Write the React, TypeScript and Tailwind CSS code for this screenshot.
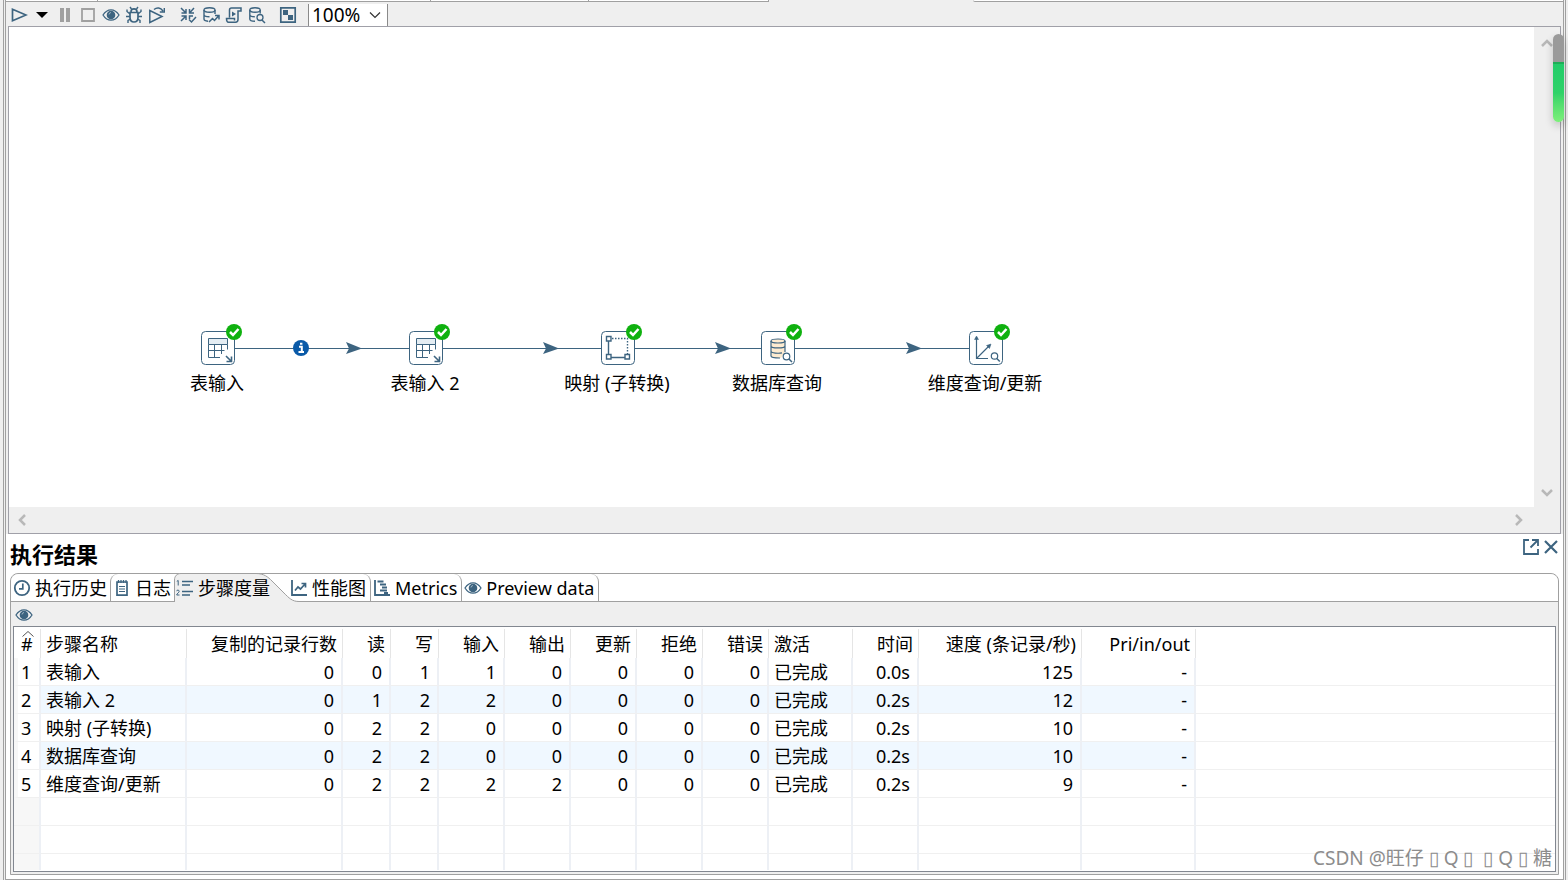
import { useState, type ReactNode } from "react";
import clsx from "clsx";

const INK = "#3d6480";

type StepKind = "table" | "mapping" | "database" | "dimension";

type Step = {
  name: string;
  kind: StepKind;
  x: number;
};

const steps: Step[] = [
  { name: "表输入", kind: "table", x: 209 },
  { name: "表输入 2", kind: "table", x: 417 },
  { name: "映射 (子转换)", kind: "mapping", x: 609 },
  { name: "数据库查询", kind: "database", x: 769 },
  { name: "维度查询/更新", kind: "dimension", x: 977 },
];

// x of the arrow tip on every hop
const hopArrows = [352, 549, 721, 912];

const columns = [
  { title: "#", width: 27, align: "left" },
  { title: "步骤名称", width: 146, align: "left" },
  { title: "复制的记录行数", width: 156, align: "right" },
  { title: "读", width: 48, align: "right" },
  { title: "写", width: 48, align: "right" },
  { title: "输入", width: 66, align: "right" },
  { title: "输出", width: 66, align: "right" },
  { title: "更新", width: 66, align: "right" },
  { title: "拒绝", width: 66, align: "right" },
  { title: "错误", width: 66, align: "right" },
  { title: "激活", width: 84, align: "left" },
  { title: "时间", width: 66, align: "right" },
  { title: "速度 (条记录/秒)", width: 163, align: "right" },
  { title: "Pri/in/out", width: 114, align: "right" },
];

const rows = [
  ["1", "表输入", "0", "0", "1", "1", "0", "0", "0", "0", "已完成", "0.0s", "125", "-"],
  ["2", "表输入 2", "0", "1", "2", "2", "0", "0", "0", "0", "已完成", "0.2s", "12", "-"],
  ["3", "映射 (子转换)", "0", "2", "2", "0", "0", "0", "0", "0", "已完成", "0.2s", "10", "-"],
  ["4", "数据库查询", "0", "2", "2", "0", "0", "0", "0", "0", "已完成", "0.2s", "10", "-"],
  ["5", "维度查询/更新", "0", "2", "2", "2", "2", "0", "0", "0", "已完成", "0.2s", "9", "-"],
];

function Icon({ children, size = 18 }: { children: ReactNode; size?: number }) {
  return (
    <svg
      width={size}
      height={size}
      viewBox="0 0 18 18"
      fill="none"
      stroke={INK}
      strokeWidth="1.7"
      className="shrink-0"
      aria-hidden="true"
    >
      {children}
    </svg>
  );
}

function EyeIcon() {
  return (
    <Icon>
      <path d="M1 9C3.500 5 6 3.800 9 3.800S14.500 5 17 9C14.500 13 12 14.200 9 14.200S3.500 13 1 9Z" strokeWidth="1.300" />
      <circle cx="9" cy="9" r="4.300" fill={INK} stroke="none" />
      <path d="M7 8.500A2.200 2.200 0 0 1 9 6.500" stroke="#9db3c2" strokeWidth="1" />
    </Icon>
  );
}

function RunIcon() {
  return (
    <Icon>
      <path d="M2.500 3.200 16 9 2.500 14.800Z" />
    </Icon>
  );
}

function PauseIcon() {
  return (
    <Icon>
      <path d="M4 2h4v14H4zM10 2h4v14h-4z" fill="#a0a0a0" stroke="none" />
    </Icon>
  );
}

function StopIcon() {
  return (
    <Icon>
      <path d="M3 3h12v12H3z" stroke="#a0a0a0" strokeWidth="1.800" />
    </Icon>
  );
}

function BugIcon() {
  return (
    <Icon>
      <path d="M5 6.500h8v5c0 2.500-1.500 4.500-4 4.500s-4-2-4-4.500zM6 6c0-2 1-3.200 3-3.200S12 4 12 6" />
      <path d="M6.500 3 5 1M11.500 3 13 1M5 8 2 5.500V3.500M13 8l3-2.500V3.500M5 10.500H1M13 10.500h4M5.500 13 3 14.500V17M12.500 13l2.500 1.500V17" strokeWidth="1.400" />
    </Icon>
  );
}

function ReplayIcon() {
  return (
    <Icon>
      <path d="M1.800 4.500v12L14 10.500Z" strokeWidth="1.500" />
      <path d="M6 3.500C9 1 12.500 1.500 15 5M16.300 2v4h-4.500" strokeWidth="1.400" />
    </Icon>
  );
}

function VerifyIcon() {
  return (
    <Icon>
      <path d="M2 2l5 5M7 3v4H2.500M15 2l-4.500 5M10.500 3v4H15M2 15l5-5M7 14v-4H2.500M10.500 13v-3H14" strokeWidth="1.500" />
      <path d="M10 13.500 12.500 16 17 11" strokeWidth="1.500" />
    </Icon>
  );
}

function ImpactIcon() {
  return (
    <Icon>
      <ellipse cx="7.500" cy="4" rx="5.500" ry="2.200" strokeWidth="1.400" />
      <path d="M2 4v9c0 1.200 1.500 2 4 2.200M13 4v4M2 8.500c0 1.600 3 2.200 5.500 2.200" strokeWidth="1.400" />
      <path d="M7 16l3.500-3.500 2 2L16.500 10M13 9.500h4v4" strokeWidth="1.500" />
    </Icon>
  );
}

function SqlIcon() {
  return (
    <Icon>
      <path d="M4.500 11.500V4C4.500 2.500 5.500 2 6.500 2H16v3h-3v8.500c0 1.700-1 2.700-2.500 2.700H3.500c-2 0-2-3.700-2-3.700h8v2" strokeWidth="1.500" />
      <path d="M7 5.500v5l4-2.500z" fill={INK} stroke="none" />
    </Icon>
  );
}

function ExploreIcon() {
  return (
    <Icon>
      <ellipse cx="7" cy="4" rx="5.200" ry="2.200" strokeWidth="1.400" />
      <path d="M1.800 4v9c0 1.200 2 2.200 5.200 2.200M12.200 4v3.500M1.800 8.500c0 1.500 2.500 2.200 5 2.200" strokeWidth="1.400" />
      <circle cx="12" cy="11.500" r="3" strokeWidth="1.300" />
      <path d="M14 14l3 3" strokeWidth="1.500" />
    </Icon>
  );
}

function ResultsIcon() {
  return (
    <Icon>
      <path d="M1.800 1.800h14.400v14.400H1.800z" />
      <path d="M4 4h5v5H4zM9 9h5v5H9z" fill={INK} stroke="none" />
    </Icon>
  );
}

function ClockIcon() {
  return (
    <Icon>
      <circle cx="9" cy="9" r="7.200" strokeWidth="1.800" />
      <path d="M9.800 4.500v5.300H6" />
    </Icon>
  );
}

function LogIcon() {
  return (
    <Icon>
      <path d="M4 3h10v13.200H4z" />
      <path d="M5.500 1v3M8 1v3M10.500 1v3M13 1v3" strokeWidth="1.300" />
      <path d="M6 7.500h6M6 10h6M6 12.500h6" strokeWidth="1.200" />
    </Icon>
  );
}

function MetricsListIcon() {
  return (
    <Icon>
      <path d="M6 2.500h11M6 6h8M6 12.500h11M6 16h8" strokeWidth="1.500" />
      <path d="M.8 2.300 2.200 1.500v5M.5 12.200c.3-1.500 2.700-1.500 2.700.1C3.200 13.500.7 14.600.7 16h2.800" strokeWidth="1" />
    </Icon>
  );
}

function ChartIcon() {
  return (
    <Icon>
      <path d="M2 1v15h15" strokeWidth="1.800" />
      <path d="M5 11.500 8 8l2.500 2L15 5M11.500 4.500h4v4" />
    </Icon>
  );
}

function GanttIcon() {
  return (
    <Icon>
      <path d="M2 1v15h15" strokeWidth="1.800" />
      <path d="M4.500 2.500h6M7 5.500h6M9 8.500h5M7 11.500h7M11 14h4" strokeWidth="1.800" />
    </Icon>
  );
}

function StepGlyph({ kind }: { kind: StepKind }) {
  if (kind === "table") {
    return (
      <g fill="none" stroke={INK} strokeWidth="1">
        <path d="M7.500 7.500h19v6h-19z" fill="#e4edf3" />
        <path d="M7.500 13.500v13H19M26.500 13.500v5M8 19.500h15.500M13.500 14v12M20.500 14v9" />
        <path d="M25 25l5 5M30.500 25.500v5h-5" strokeWidth="1.600" />
      </g>
    );
  }
  if (kind === "mapping") {
    return (
      <g fill="#fff" stroke={INK} strokeWidth="1.400">
        <path d="M7.500 10v14M10 26.500h14" />
        <path d="M11 7.500h15.500V23" fill="none" strokeDasharray="1.500 1.500" />
        <path d="M5.500 5.500h4.500V10H5.500zM5.500 23.500h4.500V28H5.500zM24 23.500h4.500V28H24z" />
      </g>
    );
  }
  if (kind === "database") {
    return (
      <g fill="none" stroke={INK} strokeWidth="1.200">
        <path d="M10 10v15c0 1.300 3 2 7 2h3l4-6V10z" fill="#fdebd0" stroke="none" />
        <ellipse cx="17" cy="10" rx="7" ry="2" fill="#fdebd0" />
        <path d="M10 10v15c0 1.300 3 2 9 2M24 10v11M10 15c0 2.600 14 2.600 14 0M10 20c0 2.400 8 2.600 11 1.800" />
        <circle cx="25.500" cy="25.500" r="3.300" fill="#fff" />
        <path d="M28 28l3 3" strokeWidth="1.500" />
      </g>
    );
  }
  return (
    <g fill="none" stroke={INK} strokeWidth="1.200">
      <path d="M7.500 6v21.500H19M7.500 27.500 21 14" />
      <path d="M5.500 8.500l2-3.500 2 3.500zM17.500 14.500l4.500-1.500-1.500 4.500z" fill={INK} strokeWidth=".5" />
      <circle cx="25.500" cy="25" r="3.200" />
      <path d="M27.800 27.500l3 3" strokeWidth="1.500" />
    </g>
  );
}

function StepNode({ step }: { step: Step }) {
  return (
    <div className="absolute top-[296px] flex w-40 -translate-x-1/2 flex-col items-center" style={{ left: step.x }}>
      <svg width="50" height="42" viewBox="-8 -8 50 42" className="block">
        <rect x=".5" y=".5" width="33" height="33" rx="4" fill="#fff" stroke={INK} />
        <StepGlyph kind={step.kind} />
        <circle cx="33" cy="1" r="8" fill="#0fb10f" />
        <path d="M29 1l3 3 5.500-6" fill="none" stroke="#fff" strokeWidth="2.500" />
      </svg>
      <span className="mt-1.5 pr-0.5 whitespace-nowrap leading-6">{step.name}</span>
    </div>
  );
}

function Canvas() {
  return (
    <div className="relative h-[480px] min-w-0 flex-1 overflow-hidden bg-white">
      <svg className="absolute top-[313px] left-0" width="1060" height="16" aria-hidden="true">
        <path d="M209 8.500H977" stroke={INK} />
        {hopArrows.map((x) => (
          <path key={x} d={`M${x - 15} 2L${x + 1} 8.500L${x - 15} 14L${x - 12} 8.500Z`} fill={INK} />
        ))}
        <circle cx="292" cy="8" r="8" fill="#0a5aa8" />
        <path d="M290 6.800h2.800v5M289.500 12h5.500M291 3.800h2.400" fill="none" stroke="#fff" strokeWidth="2" />
      </svg>
      {steps.map((step) => (
        <StepNode key={step.name} step={step} />
      ))}
    </div>
  );
}

function Chevron({ direction }: { direction: "up" | "down" | "left" | "right" }) {
  const paths = {
    up: "M1 9l5-5 5 5",
    down: "M1 3l5 5 5-5",
    left: "M8 1L3 6l5 5",
    right: "M4 1l5 5-5 5",
  };
  return (
    <svg width="12" height="12" viewBox="0 0 12 12" fill="none" stroke="#b8b8b8" strokeWidth="2.500" aria-hidden="true">
      <path d={paths[direction]} />
    </svg>
  );
}

function ToolButton({ label, children }: { label: string; children: ReactNode }) {
  return (
    <button type="button" aria-label={label} className="flex w-[23px] items-center justify-center">
      {children}
    </button>
  );
}

// bottom edge of the editor tabs that sit above the toolbar
function EditorTabsEdge() {
  return (
    <div className="flex h-0.5">
      <div className="w-[92px] border-r border-b border-[#a0a0a0] bg-white" />
      <div className="w-[333px] border-r border-b border-[#a0a0a0] bg-white" />
      <div className="w-[158px] border-r border-b border-[#a0a0a0] bg-white" />
      <div className="w-[180px] border-r border-b border-[#a0a0a0] bg-white" />
      <div className="w-[204px]" />
      <div className="flex-1 rounded-bl-sm border-b border-[#a0a0a0] bg-white" />
    </div>
  );
}

function Toolbar() {
  return (
    <div className="flex h-6 items-center pt-0.5 pl-px">
      <ToolButton label="运行"><RunIcon /></ToolButton>
      <ToolButton label="运行选项">
        <svg width="12" height="6" viewBox="0 0 12 6" aria-hidden="true">
          <path d="M0 0h12L6 6z" />
        </svg>
      </ToolButton>
      <ToolButton label="暂停"><PauseIcon /></ToolButton>
      <ToolButton label="停止"><StopIcon /></ToolButton>
      <ToolButton label="预览"><EyeIcon /></ToolButton>
      <ToolButton label="调试"><BugIcon /></ToolButton>
      <ToolButton label="重放"><ReplayIcon /></ToolButton>
      <div className="w-2" />
      <ToolButton label="校验"><VerifyIcon /></ToolButton>
      <ToolButton label="影响分析"><ImpactIcon /></ToolButton>
      <ToolButton label="SQL"><SqlIcon /></ToolButton>
      <ToolButton label="浏览数据库"><ExploreIcon /></ToolButton>
      <div className="w-2" />
      <ToolButton label="显示执行结果"><ResultsIcon /></ToolButton>
      <div className="relative ml-[9px] flex h-[22px] items-center border-x border-[#8a8a8a] bg-white">
        <select
          aria-label="缩放"
          defaultValue="100%"
          className="h-[22px] w-[78px] appearance-none bg-transparent pl-[3px] text-[19px] leading-5 outline-none"
        >
          <option>100%</option>
        </select>
        <svg width="12" height="8" viewBox="0 0 12 8" fill="none" stroke="#333" strokeWidth="1.200" className="pointer-events-none absolute right-1.5" aria-hidden="true">
          <path d="M1 1.500l5 5 5-5" />
        </svg>
      </div>
    </div>
  );
}

const tabs = [
  { label: "执行历史", icon: <ClockIcon /> },
  { label: "日志", icon: <LogIcon /> },
  { label: "步骤度量", icon: <MetricsListIcon /> },
  { label: "性能图", icon: <ChartIcon /> },
  { label: "Metrics", icon: <GanttIcon /> },
  { label: "Preview data", icon: <EyeIcon /> },
];

function TabBar() {
  const [active, setActive] = useState(2);
  return (
    <div role="tablist" className="flex h-7 rounded-t-lg bg-white">
      {tabs.map((tab, i) => (
        <button
          key={tab.label}
          type="button"
          role="tab"
          aria-selected={i === active}
          onClick={() => setActive(i)}
          className={clsx(
            "relative flex h-7 items-center whitespace-nowrap pl-0.5",
            i === active && "z-10 pr-[18px]",
            i < active && "border-b border-[#a0a0a0] pr-[3px]",
            i > active && "rounded-tr-lg border-r border-b border-[#a0a0a0] pr-1",
            i < active && i > 0 && "rounded-tl-lg border-l",
          )}
        >
          {i === active && (
            <svg className="absolute top-[-1px] left-0" width="126" height="29" viewBox="0 0 126 29" aria-hidden="true">
              <path d="M.5 29V7C.5 3 3 .5 7 .5H82C90 .5 94 4 98 8L110 20C115 25 118 28.500 125 28.500V29Z" fill="#efefef" />
              <path d="M.5 29V7C.5 3 3 .5 7 .5H82C90 .5 94 4 98 8L110 20C115 25 118 28.500 125 28.500" fill="none" stroke="#a0a0a0" />
            </svg>
          )}
          <span className="relative flex items-center gap-1">
            {tab.icon}
            {tab.label}
          </span>
        </button>
      ))}
      <div className="flex-1 border-b border-[#a0a0a0]" />
    </div>
  );
}

function MetricsTable() {
  return (
    <div className="flex-1 overflow-hidden border border-[#828790] bg-white pt-0.5">
      <table className="w-full table-fixed border-separate border-spacing-0">
        <colgroup>
          {columns.map((col) => (
            <col key={col.title} style={{ width: col.width }} />
          ))}
          <col />
        </colgroup>
        <thead>
          <tr className="h-[29px]">
            {columns.map((col, i) => (
              <th
                key={col.title}
                scope="col"
                className={clsx(
                  "relative whitespace-nowrap border-r border-[#e5e5e5] p-0 font-normal leading-6",
                  col.align === "right" ? "pr-[5px] text-right" : "text-left",
                  i === 0 ? "pl-[7px]" : "pl-[5px]",
                )}
              >
                {i === 0 && (
                  <svg width="12" height="6" viewBox="0 0 12 6" fill="none" stroke="#555" className="absolute top-0.5 left-2" aria-hidden="true">
                    <path d="M.5 5.500 6 .5l5.500 5" />
                  </svg>
                )}
                {col.title}
              </th>
            ))}
            <th className="p-0" />
          </tr>
        </thead>
        <tbody>
          {rows.map((row, r) => (
            <tr key={row[0]} className="h-7">
              {row.map((cell, i) => (
                <td
                  key={i}
                  className={clsx(
                    "whitespace-nowrap border-r-2 border-b border-r-[#edf0f5] border-b-[#f0f0f0] p-0 leading-6",
                    columns[i].align === "right" ? "pr-[7px] text-right" : "text-left",
                    i === 0 ? "border-l-4 border-l-[#f7f7f7] pl-[3px]" : "pl-[5px]",
                    i > 0 && r % 2 === 1 && "bg-[#f0f8ff]",
                  )}
                >
                  {cell}
                </td>
              ))}
              <td className="border-b border-[#f0f0f0] p-0" />
            </tr>
          ))}
          {[0, 1, 2].map((r) => (
            <tr key={r} className={r === 2 ? "h-4" : "h-7"}>
              {columns.map((col, i) => (
                <td
                  key={col.title}
                  className={clsx(
                    "border-r-2 border-r-[#edf0f5] p-0",
                    r < 2 && "border-b border-b-[#f0f0f0]",
                    i === 0 && "bg-[#f7f7f7]",
                  )}
                />
              ))}
              <td className={clsx("p-0", r < 2 && "border-b border-[#f0f0f0]")} />
            </tr>
          ))}
        </tbody>
      </table>
    </div>
  );
}

function ResultsPanel() {
  return (
    <section className="flex flex-1 flex-col bg-white pr-1 pb-1 pl-1">
      <div className="flex h-[39px] items-start justify-between pt-0.5">
        <h2 className="text-[22px] leading-9 font-bold">执行结果</h2>
        <div className="-mr-px flex gap-0.5 pt-0.5">
          <button type="button" aria-label="最大化">
            <Icon>
              <path d="M7 2H2v14h14v-5M10 2h6v6M8.500 9.500 15.500 2.500" strokeWidth="1.800" />
            </Icon>
          </button>
          <button type="button" aria-label="关闭">
            <Icon>
              <path d="M3 3l12 12M15 3 3 15" strokeWidth="2.200" />
            </Icon>
          </button>
        </div>
      </div>
      <div className="flex flex-1 flex-col rounded-t-lg border border-[#a0a0a0] bg-[#efefef]">
        <TabBar />
        <div className="flex flex-1 flex-col px-0.5 pb-0.5">
          <div className="flex h-6 items-center pt-0.5 pl-0.5">
            <button type="button" aria-label="预览数据">
              <EyeIcon />
            </button>
          </div>
          <MetricsTable />
        </div>
      </div>
    </section>
  );
}

export default function App() {
  return (
    <main className="relative flex min-h-screen bg-[#efefef] pr-0.5 pl-[3px] font-['Noto_Sans','Noto_Sans_CJK_SC',sans-serif] text-lg text-black">
      <div className="flex min-w-0 flex-1 border-x border-[#a0a0a0] px-px">
        <div className="flex min-w-0 flex-1 flex-col border-x border-b border-[#a0a0a0]">
          <EditorTabsEdge />
          <Toolbar />
          <div className="mx-0.5 border border-[#a0a0a8] bg-[#efefef]">
            <div className="flex">
              <Canvas />
              <div className="flex w-[26px] flex-col items-center justify-between pt-2.5 pb-2">
                <Chevron direction="up" />
                <Chevron direction="down" />
              </div>
            </div>
            <div className="flex h-[26px] items-center justify-between pr-9 pl-2">
              <Chevron direction="left" />
              <Chevron direction="right" />
            </div>
          </div>
          <ResultsPanel />
        </div>
      </div>

      <div className="absolute top-[34px] right-1 flex h-[88px] w-[11px] flex-col overflow-hidden rounded-full shadow-[0_4px_8px_rgba(0,0,0,0.2)]">
        <div className="h-7 bg-[#9a9a9a]" />
        <div className="flex-1 border-t-2 border-[#1eae58] bg-linear-to-b from-[#22cc6a] via-[#2fd268] to-[#7cf07a]" />
      </div>
      <div className="absolute right-4 bottom-2.5 text-[19px] leading-6 whitespace-nowrap text-[#8c8c8c]">
        CSDN @旺仔 ▯ Q ▯&nbsp; ▯ Q ▯ 糖
      </div>
    </main>
  );
}
